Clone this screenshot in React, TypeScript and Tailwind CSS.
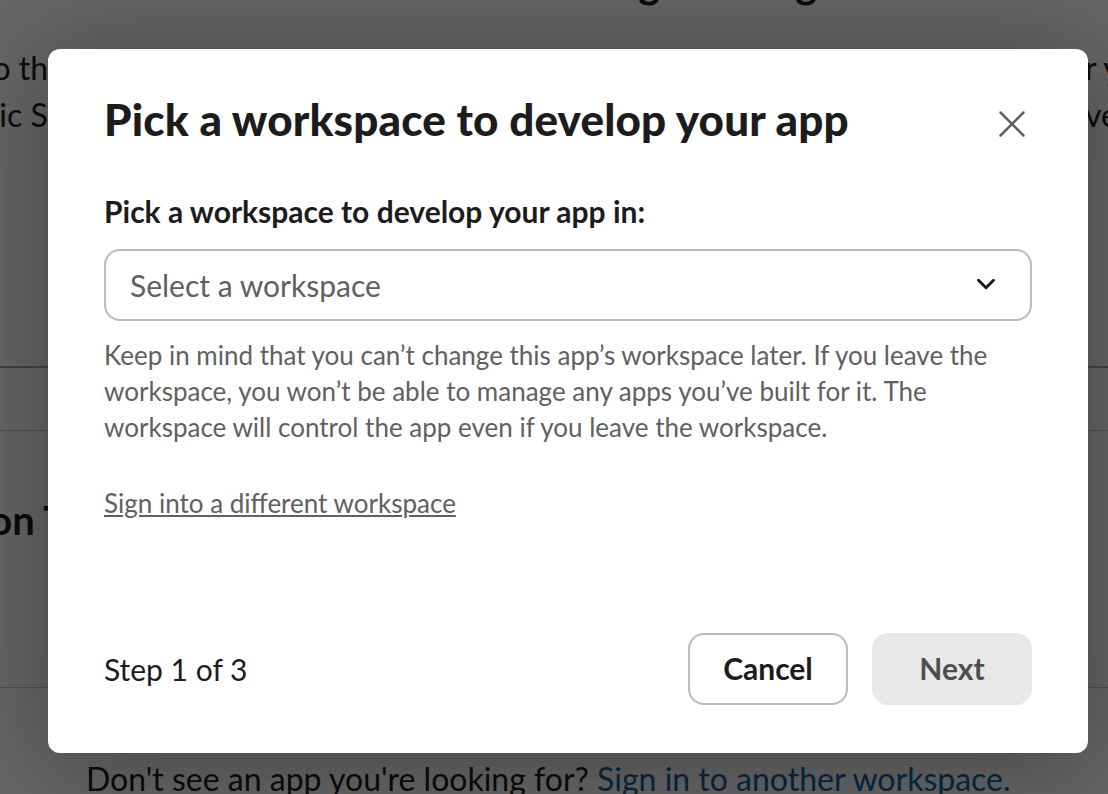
import { ChevronDown, X } from 'lucide-react'

function BackgroundPage() {
  return (
    <div className="w-full h-[794px] overflow-hidden bg-white text-[#1d1c1d] flex flex-col">
      <h1 className="mt-[-42px] text-center text-[40px] leading-[50px] font-black whitespace-nowrap">Let's build something amazing.</h1>
      <div className="mt-[36px] ml-[-19px] w-[1186px] shrink-0 flex justify-between text-[32px] leading-[47px] whitespace-nowrap">
        <span>to the</span>
        <span>for your</span>
      </div>
      <div className="ml-[-62px] w-[1180px] shrink-0 flex justify-between text-[32px] leading-[47px] whitespace-nowrap">
        <span>public Slack</span>
        <span>serve</span>
      </div>
      <div className="mt-[228px] w-full h-[65px] shrink-0 border-t-2 border-t-[#a8a8a8] border-b border-b-[#c8c8c8]" />
      <div className="w-full h-[257px] shrink-0 pt-[65px] border-b border-[#c8c8c8]">
        <h2 className="ml-[-83px] text-[40px] leading-[48px] font-bold whitespace-nowrap">Action Team</h2>
      </div>
      <p className="mt-[71px] ml-[86px] text-[32px] leading-[40px] whitespace-nowrap">
        Don't see an app you're looking for? <a className="text-[#1264a3]">Sign in to another workspace.</a>
      </p>
    </div>
  )
}

function WorkspaceModal() {
  return (
    <div className="w-[1040px] h-[704px] shrink-0 bg-white rounded-[12px] px-[56px] flex flex-col shadow-[0_8px_100px_rgba(0,0,0,0.35)]">
      <div className="flex items-center justify-between pt-[33px] h-[106px]">
        <h2 className="text-[44px] leading-[60px] font-black tracking-[0.14px] text-[#1d1c1d] whitespace-nowrap">Pick a workspace to develop your app</h2>
        <button className="mt-[11px] mr-[-4px] w-[48px] h-[48px] shrink-0 flex items-center justify-center text-[#616061]">
          <X size={46} strokeWidth={1.3} />
        </button>
      </div>
      <label className="mt-[36px] text-[30px] leading-[40px] font-bold text-[#1d1c1d]">Pick a workspace to develop your app in:</label>
      <div className="mt-[18px] h-[72px] border-2 border-[#bbbabb] rounded-[16px] pl-[24px] pr-[29px] flex items-center justify-between">
        <span className="text-[30px] leading-[40px] text-[#616061]">Select a workspace</span>
        <ChevronDown size={30} strokeWidth={2.4} className="mb-[2px] text-[#1d1c1d]" />
      </div>
      <p className="mt-[16px] text-[26px] leading-[36px] text-[#616061]">
        Keep in mind that you can’t change this app’s workspace later. If you leave the workspace, you won’t be able to manage any apps you’ve built for it. The workspace will control the app even if you leave the workspace.
      </p>
      <a className="mt-[40px] text-[26px] leading-[36px] text-[#616061] underline">Sign into a different workspace</a>
      <div className="mt-auto mb-[48px] flex items-center justify-between">
        <span className="text-[30px] leading-[40px] text-[#1d1c1d]">Step 1 of 3</span>
        <div className="flex gap-[24px]">
          <button className="w-[160px] h-[72px] pb-[2px] border-2 border-[#bbbabb] rounded-[16px] text-[30px] font-bold text-[#1d1c1d]">Cancel</button>
          <button className="w-[160px] h-[72px] pb-[2px] bg-[#e8e8e8] rounded-[16px] text-[30px] font-bold text-[#4f4e4f]">Next</button>
        </div>
      </div>
    </div>
  )
}

export default function App() {
  return (
    <div className="relative w-full h-[794px] overflow-hidden font-['Lato',sans-serif]">
      <BackgroundPage />
      <div className="absolute inset-0 bg-black/60 flex items-start pl-[48px] pt-[49px]">
        <WorkspaceModal />
      </div>
    </div>
  )
}
